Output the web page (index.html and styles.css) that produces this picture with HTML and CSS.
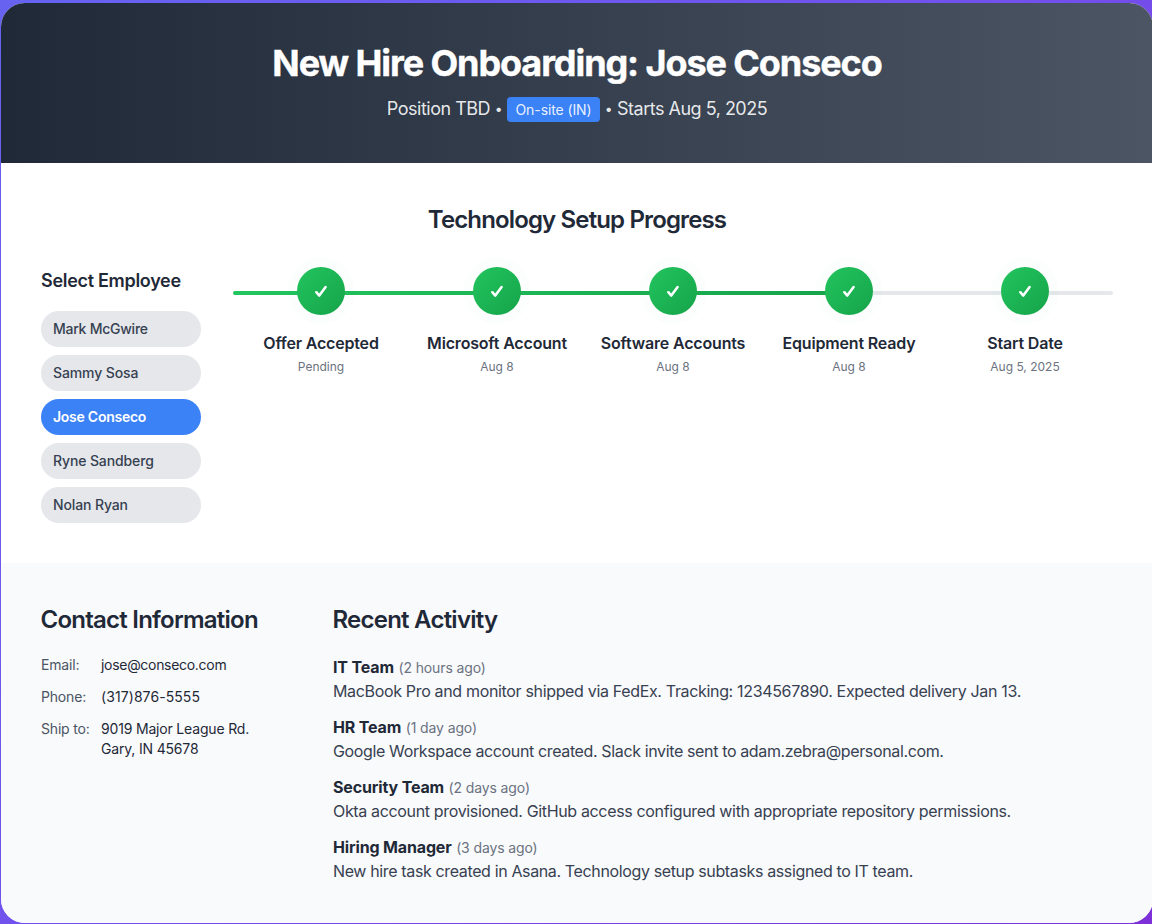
FILE: index.html
```html
<!DOCTYPE html>
<html lang="en">
<head>
<meta charset="utf-8">
<title>New Hire Onboarding</title>
<link rel="stylesheet" href="styles.css">
</head>
<body>
<main class="card">
  <header class="hero">
    <h1 class="hero-title">New Hire Onboarding: Jose Conseco</h1>
    <p class="hero-sub"><span>Position TBD</span><span class="dot">•</span><span class="badge">On-site (IN)</span><span class="dot">•</span><span>Starts Aug 5, 2025</span></p>
  </header>
  <section class="progress">
    <h2 class="heading progress-heading">Technology Setup Progress</h2>
    <div class="progress-body">
      <nav class="employees">
        <h3 class="employees-title">Select Employee</h3>
        <button class="pill tight">Mark McGwire</button>
        <button class="pill">Sammy Sosa</button>
        <button class="pill active">Jose Conseco</button>
        <button class="pill">Ryne Sandberg</button>
        <button class="pill">Nolan Ryan</button>
      </nav>
      <div class="timeline">
        <div class="track"><div class="fill"></div></div>
        <div class="step"><div class="circle"><svg class="check" viewBox="0 0 16 16"><path d="M3.3 9.2 6.3 12.6 12.6 4"/></svg></div><div class="step-name">Offer Accepted</div><div class="step-date">Pending</div></div>
        <div class="step"><div class="circle"><svg class="check" viewBox="0 0 16 16"><path d="M3.3 9.2 6.3 12.6 12.6 4"/></svg></div><div class="step-name">Microsoft Account</div><div class="step-date">Aug 8</div></div>
        <div class="step"><div class="circle"><svg class="check" viewBox="0 0 16 16"><path d="M3.3 9.2 6.3 12.6 12.6 4"/></svg></div><div class="step-name">Software Accounts</div><div class="step-date">Aug 8</div></div>
        <div class="step"><div class="circle"><svg class="check" viewBox="0 0 16 16"><path d="M3.3 9.2 6.3 12.6 12.6 4"/></svg></div><div class="step-name">Equipment Ready</div><div class="step-date">Aug 8</div></div>
        <div class="step"><div class="circle"><svg class="check" viewBox="0 0 16 16"><path d="M3.3 9.2 6.3 12.6 12.6 4"/></svg></div><div class="step-name">Start Date</div><div class="step-date">Aug 5, 2025</div></div>
      </div>
    </div>
  </section>
  <section class="details">
    <div class="contact">
      <h2 class="heading">Contact Information</h2>
      <dl class="fields">
        <dt>Email:</dt><dd class="email">jose@conseco.com</dd>
        <dt>Phone:</dt><dd class="phone">(317)876-5555</dd>
        <dt>Ship to:</dt><dd>9019 Major League Rd.<br>Gary, IN 45678</dd>
      </dl>
    </div>
    <div class="activity">
      <h2 class="heading">Recent Activity</h2>
      <article class="entry"><div class="entry-head"><strong>IT Team</strong><span class="ago">(2 hours ago)</span></div><p class="message shipping">MacBook Pro and monitor shipped via FedEx. Tracking: 1234567890. Expected delivery Jan 13.</p></article>
      <article class="entry"><div class="entry-head"><strong>HR Team</strong><span class="ago">(1 day ago)</span></div><p class="message">Google Workspace account created. Slack invite sent to adam.zebra@personal.com.</p></article>
      <article class="entry"><div class="entry-head"><strong>Security Team</strong><span class="ago">(2 days ago)</span></div><p class="message access">Okta account provisioned. GitHub access configured with appropriate repository permissions.</p></article>
      <article class="entry"><div class="entry-head"><strong>Hiring Manager</strong><span class="ago">(3 days ago)</span></div><p class="message">New hire task created in Asana. Technology setup subtasks assigned to IT team.</p></article>
    </div>
  </section>
</main>
</body>
</html>
```
FILE: styles.css
```css
* { box-sizing: border-box; margin: 0; padding: 0; }
html { height: 924px; overflow: hidden; }
body {
  height: 924px;
  overflow: hidden;
  padding: 3px 0 0 1px;
  background: linear-gradient(135deg, #6763f0 0%, #7250ec 50%, #7e30d8 100%);
  font: 16px/24px Inter, "Liberation Sans", sans-serif;
  color: #1f2937;
}
.card { width: 1152px; height: 920px; border-radius: 24px; overflow: hidden; background: #fff; }
.hero { height: 160px; padding: 40px; text-align: center; color: #fff; background: linear-gradient(90deg, #1f2937, #4b5563); }
.hero-title { font-size: 36px; line-height: 41px; height: 40px; font-weight: 700; letter-spacing: -1.09px; -webkit-text-stroke: 0.4px #fff; white-space: nowrap; }
.hero-sub { display: flex; justify-content: center; align-items: center; margin-top: 12px; height: 28px; font-size: 18px; line-height: 28px; letter-spacing: -0.5px; color: rgba(255, 255, 255, 0.9); }
.dot { width: 17px; text-align: center; font-size: 14px; }
.badge { width: 93px; height: 25px; border-radius: 4px; background: #3b82f6; font-size: 14px; line-height: 26px; letter-spacing: -0.1px; color: rgba(255, 255, 255, 0.9); }
.progress { height: 400px; padding: 40px; }
.heading { font-size: 24px; line-height: 34px; height: 32px; font-weight: 600; letter-spacing: -0.76px; white-space: nowrap; }
.progress-heading { text-align: center; margin-bottom: 32px; letter-spacing: -0.86px; }
.progress-body { display: flex; gap: 32px; }
.employees { width: 160px; display: flex; flex-direction: column; gap: 8px; }
.employees-title { font-size: 18px; line-height: 28px; font-weight: 600; letter-spacing: -0.3px; margin-bottom: 8px; }
.pill { height: 36px; border: 0; border-radius: 18px; padding: 0 12px; background: #e5e7eb; color: #374151; text-align: left; font: 500 14px/20px Inter, sans-serif; letter-spacing: -0.12px; }
.pill.tight { letter-spacing: -0.25px; }
.pill.active { background: #3b82f6; color: #fff; font-weight: 600; letter-spacing: -0.26px; }
.timeline { position: relative; width: 880px; display: grid; grid-template-columns: repeat(5, 1fr); align-items: start; }
.track { position: absolute; top: 24px; left: 0; width: 100%; height: 4px; border-radius: 2px; background: #e5e7eb; }
.fill { width: 70%; height: 4px; border-radius: 2px; background: linear-gradient(90deg, #22c55e, #16a34a); }
.step { position: relative; display: flex; flex-direction: column; align-items: center; }
.circle { display: flex; align-items: center; justify-content: center; width: 48px; height: 48px; border-radius: 50%; background: linear-gradient(135deg, #22c55e, #16a34a); box-shadow: 0 0 0 9.5px rgba(34, 197, 94, 0.02); }
.check { width: 16px; height: 16px; fill: none; stroke: #fff; stroke-width: 2.5; stroke-linecap: round; stroke-linejoin: round; }
.step-name { margin-top: 16px; font-weight: 600; letter-spacing: -0.18px; }
.step-date { margin-top: 4px; font-size: 12px; line-height: 16px; color: #6b7280; }
.details { height: 360px; padding: 40px; display: grid; grid-template-columns: 1fr 3fr; gap: 32px; background: #f9fafc; }
.details .heading { margin: 0 0 20px -0.5px; }
.fields { display: grid; grid-template-columns: 60px 1fr; row-gap: 12px; font-size: 14px; line-height: 20px; letter-spacing: -0.18px; }
.fields dt { color: #4b5563; }
.fields dd { color: #1f2937; }
.fields .email { letter-spacing: -0.3px; }
.fields .phone { letter-spacing: 0.08px; }
.activity { display: flex; flex-direction: column; }
.entry + .entry { margin-top: 12px; }
.entry-head { display: flex; align-items: baseline; gap: 4.5px; height: 24px; }
.entry strong { font-weight: 700; letter-spacing: -0.15px; }
.ago { font-size: 14px; letter-spacing: -0.12px; color: #6b7280; }
.message { color: #374151; letter-spacing: -0.365px; white-space: nowrap; }
.message.shipping { letter-spacing: -0.335px; }
.message.access { letter-spacing: -0.345px; }
```
